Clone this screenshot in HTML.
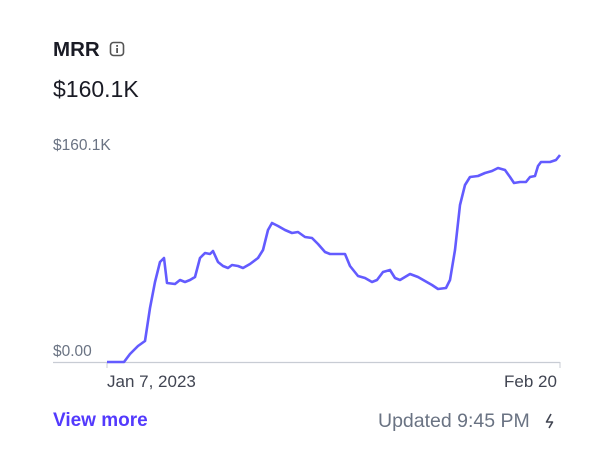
<!DOCTYPE html>
<html><head><style>
body{margin:0;width:600px;height:475px;background:#fff;font-family:"Liberation Sans",sans-serif;position:relative;overflow:hidden}
.t{position:absolute;white-space:nowrap}
</style></head><body>
<div class="t" style="left:53px;top:38px;font-size:20.5px;font-weight:bold;color:#1a1b25">MRR</div>
<svg style="position:absolute;left:109px;top:41px" width="16" height="16" viewBox="0 0 16 16"><rect x="1.5" y="1.5" width="13" height="13" rx="3" fill="none" stroke="#555" stroke-width="1.6"/><rect x="7.2" y="4" width="1.8" height="1.8" fill="#555"/><rect x="7.2" y="7" width="1.8" height="5" fill="#555"/></svg>
<div class="t" style="left:53px;top:76px;font-size:23px;color:#1a1b25">$160.1K</div>
<div class="t" style="left:53px;top:137px;font-size:15.5px;color:#6a7383">$160.1K</div>
<div class="t" style="left:53px;top:343px;font-size:15.5px;color:#6a7383">$0.00</div>
<svg style="position:absolute;left:0;top:0" width="600" height="475">
<line x1="53" y1="362.5" x2="560" y2="362.5" stroke="#c8ccd4" stroke-width="1.2"/>
<line x1="107" y1="362" x2="107" y2="368" stroke="#c8ccd4"/>
<line x1="560" y1="362" x2="560" y2="368" stroke="#c8ccd4"/>
<polyline fill="none" stroke="#635bff" stroke-width="2.6" stroke-linejoin="round" points="107,362 124,362 130,354 138,346 145,341 150,308 155,282 160,262 164,258 167,283 175,284 180,280 185,282 190,280 195,277 200,258 205,253 210,254 213,251 218,262 223,266 228,268 232,265 238,266 243,268 250,264 258,258 263,250 268,230 272,223 278,226 285,230 292,233 298,232 305,237 312,238 318,244 325,252 330,254 345,254 350,266 358,276 365,278 372,282 377,280 383,272 390,270 395,278 400,280 410,274 418,277 425,281 432,285 438,289 446,288 450,280 455,250 460,205 465,185 470,177 478,176 485,173 492,171 498,168 505,170 510,177 514,183 520,182 526,182 530,177 535,176 538,166 541,162 550,162 556,160 560,155"/>
</svg>
<div class="t" style="left:107px;top:372px;font-size:17px;color:#414552">Jan 7, 2023</div>
<div class="t" style="left:504px;top:372px;font-size:17px;color:#414552">Feb 20</div>
<div class="t" style="left:53px;top:410px;font-size:19px;font-weight:bold;color:#533afd">View more</div>
<div class="t" style="left:378px;top:410px;font-size:19.5px;color:#6a7383">Updated 9:45 PM</div>
<svg style="position:absolute;left:544px;top:412px" width="12" height="18" viewBox="0 0 12 18"><path d="M7 2 L2.5 10 H8.5 L5 16" fill="none" stroke="#414552" stroke-width="1.6" stroke-linejoin="round"/></svg>
</body></html>
